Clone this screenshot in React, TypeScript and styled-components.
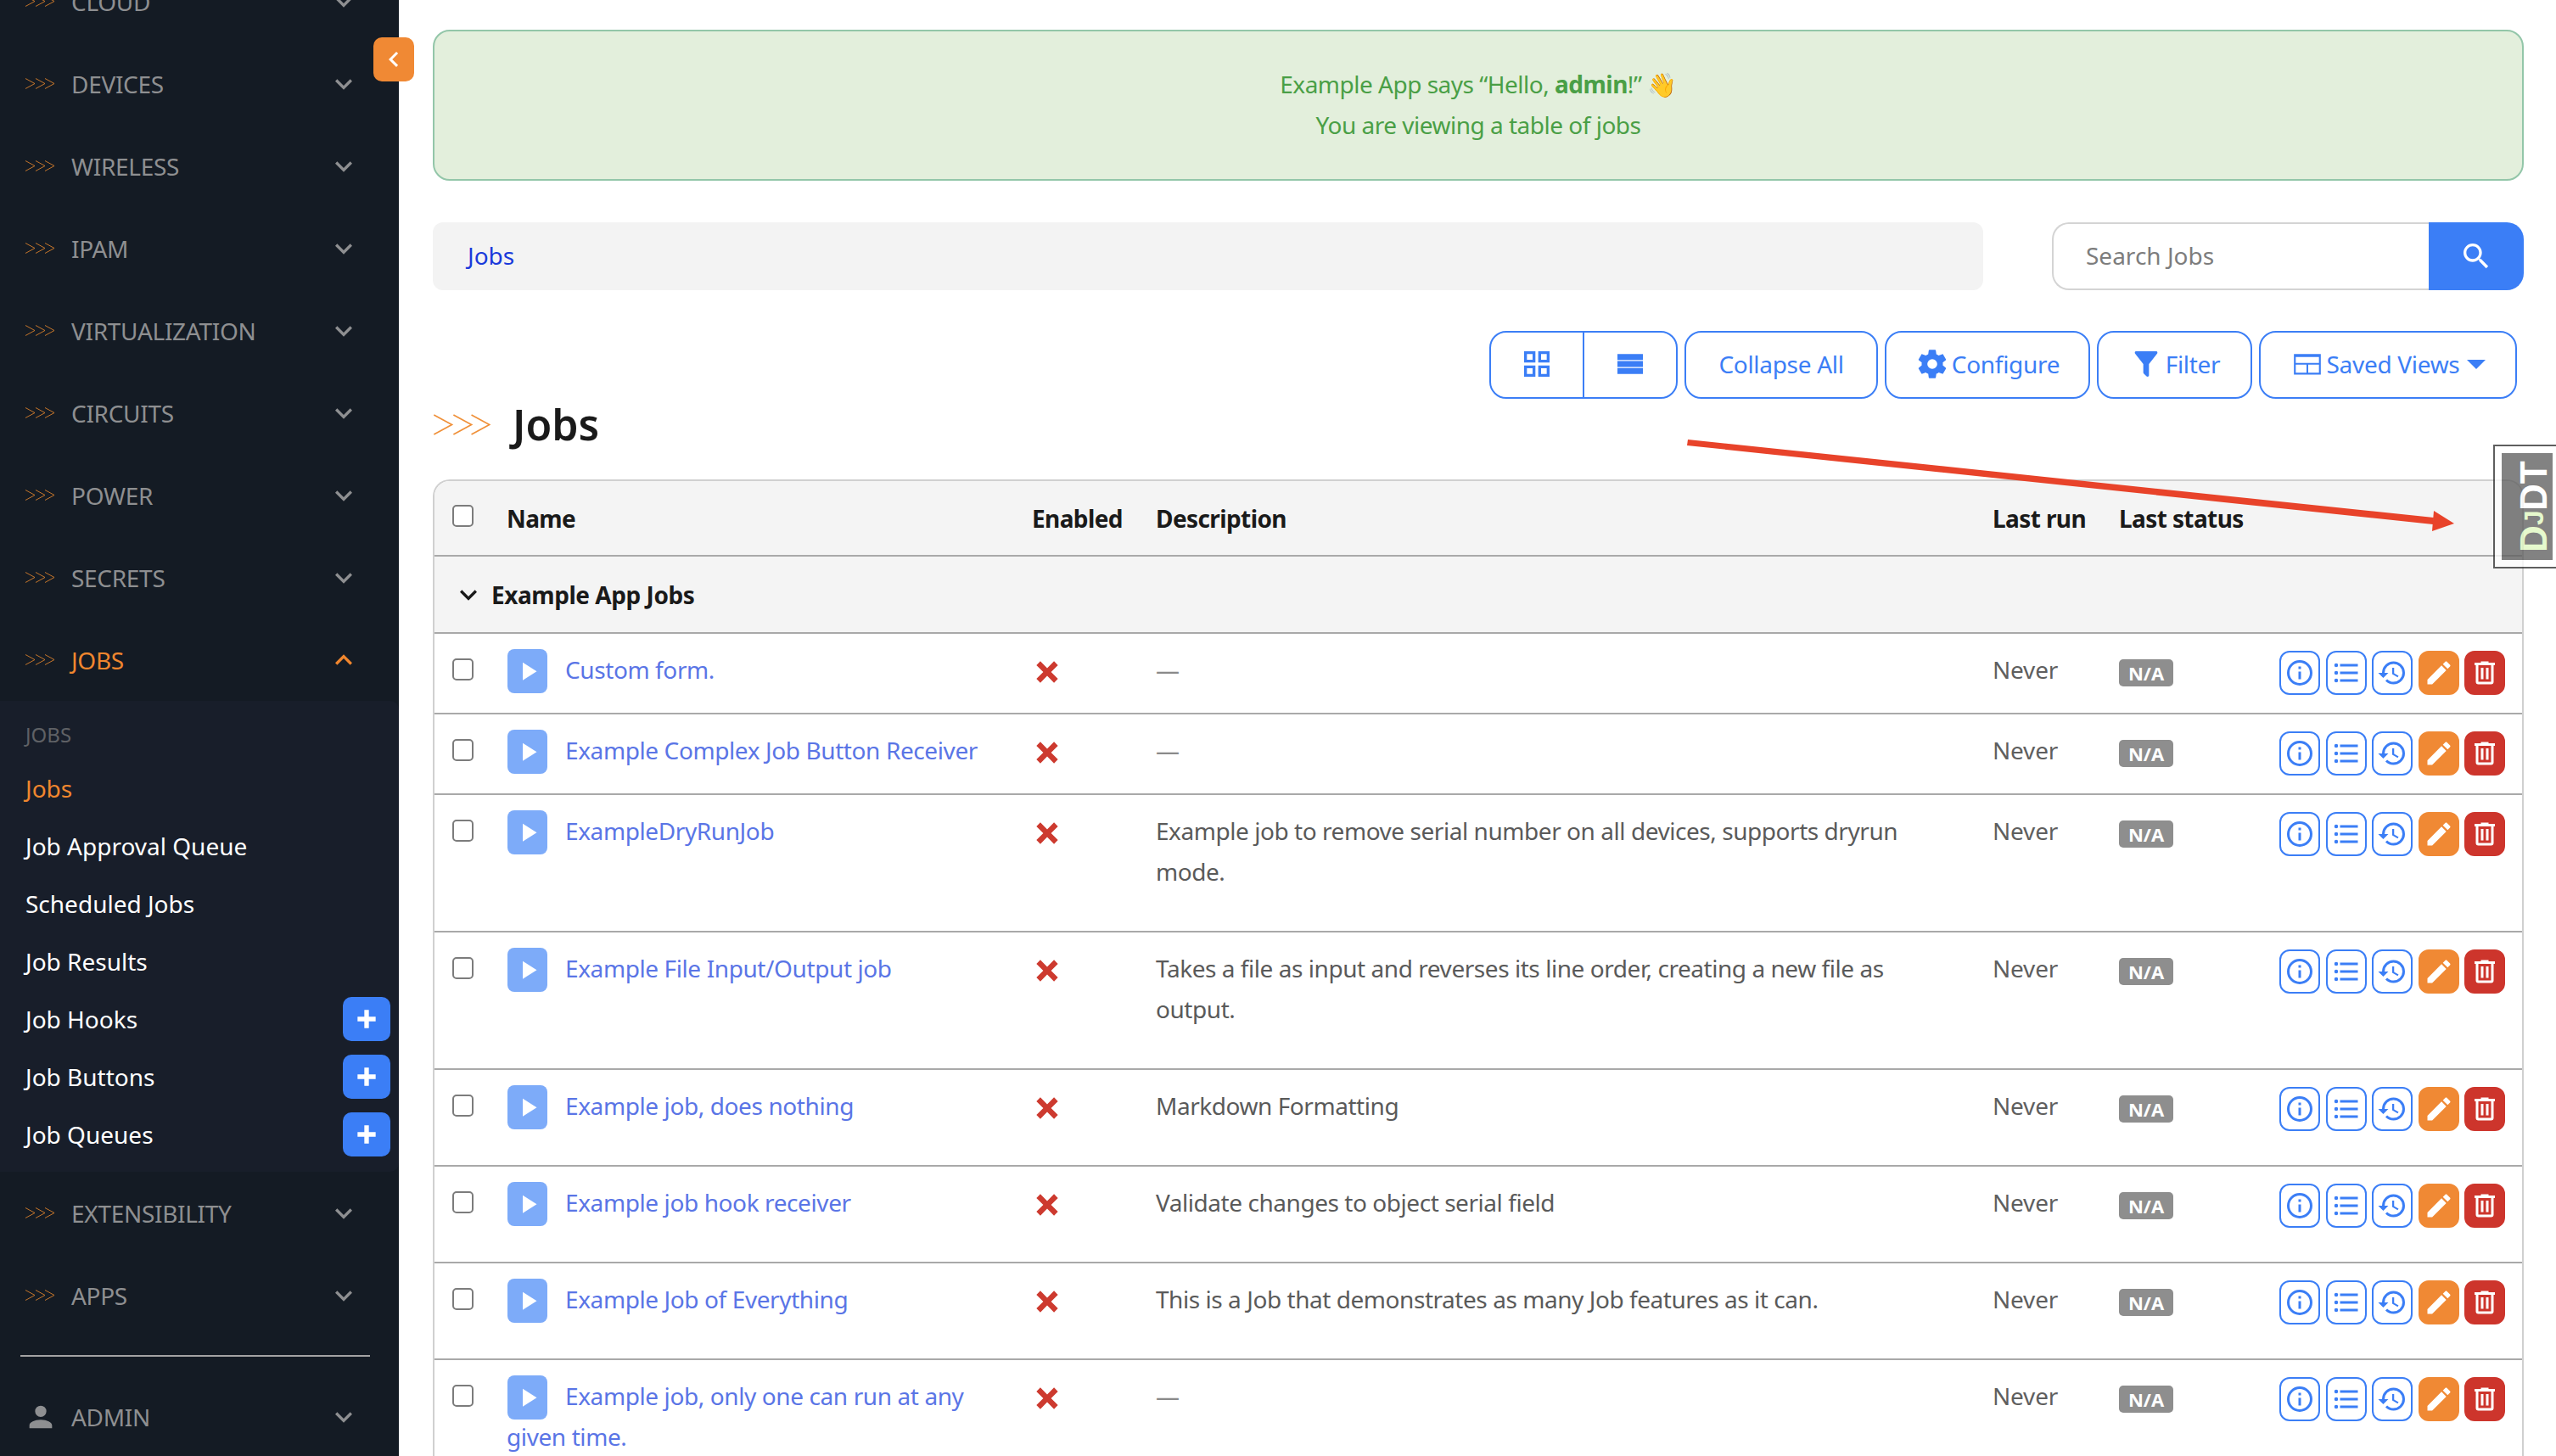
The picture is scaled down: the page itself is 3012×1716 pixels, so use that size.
import React from "react";
import styled, { createGlobalStyle } from "styled-components";

const FONT = `"Noto Sans", "Open Sans", sans-serif`;

const GlobalStyle = createGlobalStyle`
  html, body {
    margin: 0;
    height: 100%;
    overflow: hidden;
    background: #fff;
    font-family: ${FONT};
    font-size: 28px;
    line-height: 48px;
    color: #1a1a1a;
  }
  * { box-sizing: border-box; }
`;

const mdi = {
  chevronDown: "M7.41,8.58L12,13.17L16.59,8.58L18,10L12,16L6,10L7.41,8.58Z",
  chevronUp: "M7.41,15.41L12,10.83L16.59,15.41L18,14L12,8L6,14L7.41,15.41Z",
  chevronLeft: "M15.41,16.58L10.83,12L15.41,7.41L14,6L8,12L14,18L15.41,16.58Z",
  plus: "M20 14H14V20H10V14H4V10H10V4H14V10H20V14Z",
  play: "M8,5.14V19.14L19,12.14L8,5.14Z",
  close: "M20 6.91L17.09 4L12 9.09L6.91 4L4 6.91L9.09 12L4 17.09L6.91 20L12 14.91L17.09 20L20 17.09L14.91 12L20 6.91Z",
  account: "M12,4A4,4 0 0,1 16,8A4,4 0 0,1 12,12A4,4 0 0,1 8,8A4,4 0 0,1 12,4M12,14C16.42,14 20,15.79 20,18V20H4V18C4,15.79 7.58,14 12,14Z",
  magnify: "M9.5,3A6.5,6.5 0 0,1 16,9.5C16,11.11 15.41,12.59 14.44,13.73L14.71,14H15.5L20.5,19L19,20.5L14,15.5V14.71L13.73,14.44C12.59,15.41 11.11,16 9.5,16A6.5,6.5 0 0,1 3,9.5A6.5,6.5 0 0,1 9.5,3M9.5,5C7,5 5,7 5,9.5C5,12 7,14 9.5,14C12,14 14,12 14,9.5C14,7 12,5 9.5,5Z",
  grid: "M3 11H11V3H3M5 5H9V9H5M13 21H21V13H13M15 15H19V19H15M3 21H11V13H3M5 15H9V19H5M13 3V11H21V3M19 9H15V5H19Z",
  rows: "M3 5H21V9.2H3V5M3 9.9H21V14.1H3V9.9M3 14.8H21V19H3V14.8Z",
  cog: "M12,15.5A3.5,3.5 0 0,1 8.5,12A3.5,3.5 0 0,1 12,8.5A3.5,3.5 0 0,1 15.5,12A3.5,3.5 0 0,1 12,15.5M19.43,12.97C19.47,12.65 19.5,12.33 19.5,12C19.5,11.67 19.47,11.34 19.43,11L21.54,9.37C21.73,9.22 21.78,8.95 21.66,8.73L19.66,5.27C19.54,5.05 19.27,4.96 19.05,5.05L16.56,6.05C16.04,5.66 15.5,5.32 14.87,5.07L14.5,2.42C14.46,2.18 14.25,2 14,2H10C9.75,2 9.54,2.18 9.5,2.42L9.13,5.07C8.5,5.32 7.96,5.66 7.44,6.05L4.95,5.05C4.73,4.96 4.46,5.05 4.34,5.27L2.34,8.73C2.21,8.95 2.27,9.22 2.46,9.37L4.57,11C4.53,11.34 4.5,11.67 4.5,12C4.5,12.33 4.53,12.65 4.57,12.97L2.46,14.63C2.27,14.78 2.21,15.05 2.34,15.27L4.34,18.73C4.46,18.95 4.73,19.03 4.95,18.95L7.44,17.94C7.96,18.34 8.5,18.68 9.13,18.93L9.5,21.58C9.54,21.82 9.75,22 10,22H14C14.25,22 14.46,21.82 14.5,21.58L14.87,18.93C15.5,18.67 16.04,18.34 16.56,17.94L19.05,18.95C19.27,19.03 19.54,18.95 19.66,18.73L21.66,15.27C21.78,15.05 21.73,14.78 21.54,14.63L19.43,12.97Z",
  filter: "M14,12V19.88C14.04,20.18 13.94,20.5 13.71,20.71C13.32,21.1 12.69,21.1 12.3,20.71L10.29,18.7C10.06,18.47 9.96,18.16 10,17.87V12H9.97L4.21,4.62C3.87,4.19 3.95,3.56 4.38,3.22C4.57,3.08 4.78,3 5,3V3H19V3C19.22,3 19.43,3.08 19.62,3.22C20.05,3.56 20.13,4.19 19.79,4.62L14.03,12H14Z",
  table: "M2.5 5H21.5V19.5H2.5V5M3.8 7V11.2H20.2V7H3.8M3.8 12.4V18.2H11.4V12.4H3.8M12.6 12.4V18.2H20.2V12.4H12.6Z",
  info: "M11,9H13V7H11M12,20C7.59,20 4,16.41 4,12C4,7.59 7.59,4 12,4C16.41,4 20,7.59 20,12C20,16.41 16.41,20 12,20M12,2A10,10 0 0,0 2,12A10,10 0 0,0 12,22A10,10 0 0,0 22,12A10,10 0 0,0 12,2M11,17H13V11H11V17Z",
  list: "M7,5H21V7H7V5M7,13V11H21V13H7M4,4.5A1.5,1.5 0 0,1 5.5,6A1.5,1.5 0 0,1 4,7.5A1.5,1.5 0 0,1 2.5,6A1.5,1.5 0 0,1 4,4.5M4,10.5A1.5,1.5 0 0,1 5.5,12A1.5,1.5 0 0,1 4,13.5A1.5,1.5 0 0,1 2.5,12A1.5,1.5 0 0,1 4,10.5M7,19V17H21V19H7M4,16.5A1.5,1.5 0 0,1 5.5,18A1.5,1.5 0 0,1 4,19.5A1.5,1.5 0 0,1 2.5,18A1.5,1.5 0 0,1 4,16.5Z",
  history: "M13.5,8H12V13L16.28,15.54L17,14.33L13.5,12.25V8M13,3A9,9 0 0,0 4,12H1L4.96,16.03L9,12H6A7,7 0 0,1 13,5A7,7 0 0,1 20,12A7,7 0 0,1 13,19C11.07,19 9.32,18.21 8.06,16.94L6.64,18.36C8.27,20 10.5,21 13,21A9,9 0 0,0 22,12A9,9 0 0,0 13,3",
  pencil: "M20.71,7.04C21.1,6.65 21.1,6 20.71,5.63L18.37,3.29C18,2.9 17.35,2.9 16.96,3.29L15.12,5.12L18.87,8.87M3,17.25V21H6.75L17.81,9.93L14.06,6.18L3,17.25Z",
  trash: "M9,3V4H4V6H5V19A2,2 0 0,0 7,21H17A2,2 0 0,0 19,19V6H20V4H15V3H9M7,6H17V19H7V6M9,8V17H11V8H9M13,8V17H15V8H13Z",
};

const IconSvg = styled.svg`
  display: block;
  flex: none;
`;

const Icon = ({ d, size = 24 }: { d: string; size?: number }) => (
  <IconSvg width={size} height={size} viewBox="0 0 24 24" fill="currentColor" aria-hidden>
    <path d={d} />
  </IconSvg>
);

const Chevrons = ({ width, height, color }: { width: number; height: number; color: string }) => (
  <svg width={width} height={height} viewBox="0 0 34 13" fill="none" stroke={color} strokeWidth="0.9" aria-hidden>
    <path d="M0 .5 11 6.5 0 12.5M12 .5 23 6.5 12 12.5M23 .5 34 6.5 23 12.5" />
  </svg>
);

const Shell = styled.div`
  position: relative;
  display: flex;
  width: 3012px;
  height: 1716px;
  overflow: hidden;
`;

const Sidebar = styled.nav`
  flex: 0 0 470px;
  height: 100%;
  overflow: hidden;
  background: #141b24;
`;

const SideScroll = styled.div`
  margin-top: -47px;
`;

const NavRow = styled.div<{ $active?: boolean }>`
  display: flex;
  align-items: center;
  height: 97px;
  padding: 0 45px 0 30px;
  font-size: 28px;
  letter-spacing: -0.3px;
  color: ${(p) => (p.$active ? "#f0862e" : "#8e8f91")};
`;

const NavMark = styled.span`
  display: flex;
  align-items: center;
  flex: 0 0 54px;
`;

const AccountMark = styled(NavMark)`
  margin-left: -2px;
  flex-basis: 56px;
`;

const NavLabel = styled.span`
  flex: 1;
`;

const SubPanel = styled.div`
  background: #181e2a;
  border-radius: 0 10px 10px 0;
  padding: 14px 10px 10px 30px;
`;

const SubHead = styled.div`
  margin-bottom: 3px;
  font-size: 24px;
  line-height: 52px;
  color: #5f6165;
`;

const SubRow = styled.div<{ $active?: boolean }>`
  display: flex;
  align-items: center;
  justify-content: space-between;
  height: 68px;
  color: ${(p) => (p.$active ? "#f0862e" : "#fff")};
`;

const AddButton = styled.span`
  display: flex;
  align-items: center;
  justify-content: center;
  width: 56px;
  height: 52px;
  border-radius: 10px;
  background: #3b7ef6;
  color: #fff;
`;

const SideDivider = styled.hr`
  width: 412px;
  height: 2px;
  margin: 22px 0 22px 24px;
  border: 0;
  background: #a3a3a3;
`;

const CollapseToggle = styled.button`
  position: absolute;
  top: 44px;
  left: 440px;
  display: flex;
  align-items: center;
  justify-content: center;
  width: 48px;
  height: 52px;
  padding: 0;
  border: 0;
  border-radius: 10px;
  background: #f08934;
  color: #fff;
`;

const Main = styled.main`
  flex: 1;
  min-width: 0;
  padding: 35px 38px 0 40px;
`;

const Alert = styled.div`
  height: 178px;
  padding: 38px 0 0;
  border: 2px solid #93c6a9;
  border-radius: 20px;
  background: #e3efdc;
  color: #4a9f46;
  letter-spacing: -0.5px;
  text-align: center;
`;

const SearchBar = styled.div`
  display: flex;
  justify-content: space-between;
  margin-top: 49px;
`;

const Crumbs = styled.div`
  display: flex;
  align-items: center;
  width: 1827px;
  height: 80px;
  padding: 0 41px 3px;
  border-radius: 12px;
  background: #f3f3f3;
  color: #1a3adb;
`;

const SearchBox = styled.div`
  display: flex;
  width: 556px;
  height: 80px;
`;

const SearchInput = styled.div`
  flex: 1;
  display: flex;
  align-items: center;
  padding: 0 0 3px 38px;
  border: 2px solid #d4d4d4;
  border-right: 0;
  border-radius: 20px 0 0 20px;
  color: #7d7d7d;
`;

const SearchButton = styled.button`
  display: flex;
  align-items: center;
  justify-content: center;
  width: 112px;
  padding: 0;
  border: 0;
  border-radius: 0 20px 20px 0;
  background: #3b7ef6;
  color: #fff;
`;

const ToolRow = styled.div`
  display: flex;
  justify-content: flex-end;
  gap: 8px;
  margin: 48px 8px 0 0;
`;

const ToolGroup = styled.div<{ $width: number }>`
  display: flex;
  width: ${(p) => p.$width}px;
  height: 80px;
  border: 2px solid #3b7ef6;
  border-radius: 20px;
  color: #3b7ef6;
`;

const ToolCell = styled.div<{ $divided?: boolean }>`
  flex: 1;
  display: flex;
  align-items: center;
  justify-content: center;
  gap: 3px;
  padding-bottom: 2px;
  letter-spacing: -0.3px;
  border-right: ${(p) => (p.$divided ? "2px solid #3b7ef6" : "0")};
`;

const Caret = styled.span`
  width: 0;
  height: 0;
  margin-left: 6px;
  border-style: solid;
  border-width: 11px 11px 0;
  border-color: #3b7ef6 transparent transparent;
`;

const TitleRow = styled.div`
  display: flex;
  align-items: center;
  gap: 26px;
  height: 50px;
  margin-top: 5px;
`;

const Title = styled.h1`
  margin: 0;
  font-size: 50px;
  line-height: 50px;
  font-weight: 600;
`;

const TableWrap = styled.div`
  margin-top: 40px;
  border: 2px solid #d0d0d0;
  border-bottom: 0;
  border-radius: 20px 20px 0 0;
  overflow: hidden;
`;

const JobsTable = styled.table`
  width: 100%;
  border-collapse: collapse;
  table-layout: fixed;
`;

const Th = styled.th`
  height: 88px;
  padding: 0 22px;
  background: #f4f4f4;
  border-bottom: 2px solid #a9a9a9;
  text-align: left;
  font-weight: 700;
  letter-spacing: -0.6px;
  white-space: nowrap;
  vertical-align: middle;
`;

const GroupCell = styled.td`
  height: 91px;
  padding: 0 22px 0 20px;
  background: #f4f4f4;
  border-bottom: 2px solid #a9a9a9;
  font-weight: 700;
  letter-spacing: -0.45px;
`;

const GroupLabel = styled.div`
  display: flex;
  align-items: center;
  gap: 7px;
`;

const Td = styled.td`
  padding: 18px 22px 21px;
  border-bottom: 2px solid #a9a9a9;
  vertical-align: top;
  color: #5a5a5a;
`;

const Check = styled.span<{ $head?: boolean }>`
  display: block;
  width: 25px;
  height: 26px;
  margin: ${(p) => (p.$head ? "-6px" : "11px")} 0 0 -1px;
  border: 2px solid #7c7c7c;
  border-radius: 5px;
  background: #fff;
`;

const PlayButton = styled.span`
  display: inline-flex;
  align-items: center;
  justify-content: center;
  width: 47px;
  height: 52px;
  margin: 0 21px -4px 1px;
  border-radius: 8px;
  background: #7dabf9;
  color: #fff;
  vertical-align: top;
`;

const JobLink = styled.span`
  color: #5a75e6;
  letter-spacing: -0.4px;
`;

const NoMark = styled.span`
  display: block;
  width: 38px;
  margin-left: -1px;
  padding-top: 8px;
  color: #cd3a2f;
`;

const Desc = styled.p`
  margin: 0 0 25px;
  letter-spacing: -0.45px;
`;

const Dash = styled.span`
  color: #8a8a8a;
`;

const Muted = styled.span`
  display: block;
  color: #5f5f5f;
  letter-spacing: -0.2px;
`;

const Badge = styled.span`
  display: inline-block;
  width: 64px;
  height: 32px;
  margin-top: 12px;
  border-radius: 5px;
  background: #8e8e8e;
  color: #fff;
  font-size: 22px;
  font-weight: 700;
  line-height: 32px;
  text-align: center;
  vertical-align: top;
`;

const Actions = styled.div`
  display: flex;
  gap: 6.5px;
  margin-top: 2px;
`;

const ActionButton = styled.span<{ $fill?: string }>`
  flex: 0 0 48px;
  display: flex;
  align-items: center;
  justify-content: center;
  height: 52px;
  border-radius: 12px;
  border: 2px solid ${(p) => p.$fill ?? "#3b7ef6"};
  background: ${(p) => p.$fill ?? "#fff"};
  color: ${(p) => (p.$fill ? "#fff" : "#3b7ef6")};
`;

const DebugHandle = styled.div`
  position: absolute;
  top: 524px;
  left: 2938px;
  width: 100px;
  height: 146px;
  padding: 8px;
  border: 2px solid #333;
  background: #fff;
  opacity: 0.78;
`;

const DebugLabel = styled.div`
  display: flex;
  justify-content: center;
  align-items: center;
  height: 100%;
  padding-right: 16px;
  background: #5f5f5f;
  color: #fff;
  font-family: "Liberation Sans", sans-serif;
  font-size: 44px;
  line-height: 1;
  font-weight: 700;
  writing-mode: vertical-rl;
  transform: rotate(180deg);
`;

const DebugAccent = styled.span<{ $small?: boolean }>`
  color: #dff8c0;
  font-size: ${(p) => (p.$small ? 32 : 44)}px;
`;

const Annotation = styled.svg`
  position: absolute;
  top: 0;
  left: 0;
  pointer-events: none;
`;

const navTop = ["CLOUD", "DEVICES", "WIRELESS", "IPAM", "VIRTUALIZATION", "CIRCUITS", "POWER", "SECRETS"];

const subItems = [
  { label: "Jobs", active: true },
  { label: "Job Approval Queue" },
  { label: "Scheduled Jobs" },
  { label: "Job Results" },
  { label: "Job Hooks", add: true },
  { label: "Job Buttons", add: true },
  { label: "Job Queues", add: true },
];

const jobs = [
  { name: "Custom form." },
  { name: "Example Complex Job Button Receiver" },
  { name: "ExampleDryRunJob", desc: "Example job to remove serial number on all devices, supports dryrun mode." },
  { name: "Example File Input/Output job", desc: "Takes a file as input and reverses its line order, creating a new file as output." },
  { name: "Example job, does nothing", desc: "Markdown Formatting" },
  { name: "Example job hook receiver", desc: "Validate changes to object serial field" },
  { name: "Example Job of Everything", desc: "This is a Job that demonstrates as many Job features as it can." },
  { name: "Example job, only one can run at any given time." },
];

const colWidths = [63, 619, 146, 986, 149, 189];

const NavItem = ({ label, active }: { label: string; active?: boolean }) => (
  <NavRow $active={active}>
    <NavMark>
      <Chevrons width={34} height={13} color="#d9802c" />
    </NavMark>
    <NavLabel>{label}</NavLabel>
    <Icon d={active ? mdi.chevronUp : mdi.chevronDown} size={40} />
  </NavRow>
);

export default function App() {
  return (
    <Shell>
      <GlobalStyle />
      <Sidebar>
        <SideScroll>
          {navTop.map((label) => (
            <NavItem key={label} label={label} />
          ))}
          <NavItem label="JOBS" active />
          <SubPanel>
            <SubHead>JOBS</SubHead>
            {subItems.map((item) => (
              <SubRow key={item.label} $active={item.active}>
                {item.label}
                {item.add && (
                  <AddButton>
                    <Icon d={mdi.plus} size={32} />
                  </AddButton>
                )}
              </SubRow>
            ))}
          </SubPanel>
          <NavItem label="EXTENSIBILITY" />
          <NavItem label="APPS" />
          <SideDivider />
          <NavRow>
            <AccountMark>
              <Icon d={mdi.account} size={40} />
            </AccountMark>
            <NavLabel>ADMIN</NavLabel>
            <Icon d={mdi.chevronDown} size={40} />
          </NavRow>
        </SideScroll>
      </Sidebar>
      <CollapseToggle aria-label="Collapse">
        <Icon d={mdi.chevronLeft} size={36} />
      </CollapseToggle>

      <Main>
        <Alert>
          Example App says “Hello, <b>admin</b>!” 👋
          <br />
          You are viewing a table of jobs
        </Alert>

        <SearchBar>
          <Crumbs>Jobs</Crumbs>
          <SearchBox>
            <SearchInput>Search Jobs</SearchInput>
            <SearchButton aria-label="Search">
              <Icon d={mdi.magnify} size={40} />
            </SearchButton>
          </SearchBox>
        </SearchBar>

        <ToolRow>
          <ToolGroup $width={222}>
            <ToolCell $divided>
              <Icon d={mdi.grid} size={40} />
            </ToolCell>
            <ToolCell>
              <Icon d={mdi.rows} size={40} />
            </ToolCell>
          </ToolGroup>
          <ToolGroup $width={228}>
            <ToolCell>Collapse All</ToolCell>
          </ToolGroup>
          <ToolGroup $width={242}>
            <ToolCell>
              <Icon d={mdi.cog} size={40} />
              Configure
            </ToolCell>
          </ToolGroup>
          <ToolGroup $width={183}>
            <ToolCell>
              <Icon d={mdi.filter} size={40} />
              Filter
            </ToolCell>
          </ToolGroup>
          <ToolGroup $width={304}>
            <ToolCell>
              <Icon d={mdi.table} size={40} />
              Saved Views
              <Caret />
            </ToolCell>
          </ToolGroup>
        </ToolRow>

        <TitleRow>
          <Chevrons width={68} height={25} color="#f0913a" />
          <Title>Jobs</Title>
        </TitleRow>

        <TableWrap>
          <JobsTable>
            <colgroup>
              {colWidths.map((w, i) => (
                <col key={i} width={w} />
              ))}
              <col />
            </colgroup>
            <thead>
              <tr>
                <Th>
                  <Check $head />
                </Th>
                <Th>Name</Th>
                <Th>Enabled</Th>
                <Th>Description</Th>
                <Th>Last run</Th>
                <Th>Last status</Th>
                <Th />
              </tr>
            </thead>
            <tbody>
              <tr>
                <GroupCell colSpan={7}>
                  <GroupLabel>
                    <Icon d={mdi.chevronDown} size={40} />
                    Example App Jobs
                  </GroupLabel>
                </GroupCell>
              </tr>
              {jobs.map((job) => (
                <tr key={job.name}>
                  <Td>
                    <Check />
                  </Td>
                  <Td>
                    <PlayButton>
                      <Icon d={mdi.play} size={36} />
                    </PlayButton>
                    <JobLink>{job.name}</JobLink>
                  </Td>
                  <Td>
                    <NoMark>
                      <Icon d={mdi.close} size={38} />
                    </NoMark>
                  </Td>
                  <Td>{job.desc ? <Desc>{job.desc}</Desc> : <Dash>—</Dash>}</Td>
                  <Td>
                    <Muted>Never</Muted>
                  </Td>
                  <Td>
                    <Badge>N/A</Badge>
                  </Td>
                  <Td>
                    <Actions>
                      <ActionButton>
                        <Icon d={mdi.info} size={36} />
                      </ActionButton>
                      <ActionButton>
                        <Icon d={mdi.list} size={36} />
                      </ActionButton>
                      <ActionButton>
                        <Icon d={mdi.history} size={36} />
                      </ActionButton>
                      <ActionButton $fill="#f08934">
                        <Icon d={mdi.pencil} size={36} />
                      </ActionButton>
                      <ActionButton $fill="#cd352c">
                        <Icon d={mdi.trash} size={36} />
                      </ActionButton>
                    </Actions>
                  </Td>
                </tr>
              ))}
            </tbody>
          </JobsTable>
        </TableWrap>
      </Main>

      <DebugHandle>
        <DebugLabel>
          <DebugAccent>D</DebugAccent>
          <DebugAccent $small>J</DebugAccent>
          DT
        </DebugLabel>
      </DebugHandle>

      <Annotation width="3012" height="1716" viewBox="0 0 3012 1716" aria-hidden>
        <path d="M1989 518 2868 610 2867 618 1988 525Z" fill="#e8432a" />
        <path d="M2868 602 2892 617 2866 626Z" fill="#e8432a" />
      </Annotation>
    </Shell>
  );
}
